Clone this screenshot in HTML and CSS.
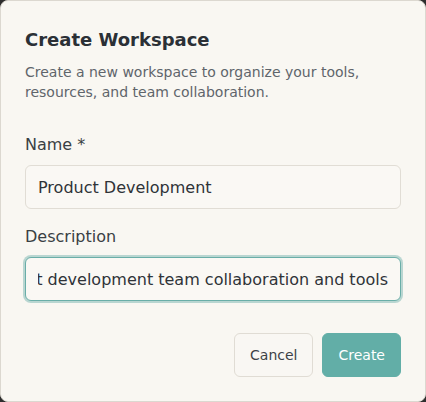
FILE: index.html
```html
<!DOCTYPE html>
<html lang="en">
<head>
<meta charset="utf-8">
<title>Create Workspace</title>
<link rel="stylesheet" href="styles.css">
</head>
<body>
<form class="dialog" onsubmit="return false">
  <h2 class="dialog-title">Create Workspace</h2>
  <p class="dialog-desc">Create a new workspace to organize your tools, resources, and team collaboration.</p>
  <div class="field field-name">
    <label class="field-label" for="ws-name">Name *</label>
    <input class="field-input" id="ws-name" type="text" value="Product Development">
  </div>
  <div class="field field-desc">
    <label class="field-label" for="ws-desc">Description</label>
    <input class="field-input field-input-focused field-input-end" id="ws-desc" type="text" value="Workspace for product development team collaboration and tools">
  </div>
  <div class="dialog-actions">
    <button type="button" class="btn btn-secondary">Cancel</button>
    <button type="submit" class="btn btn-primary">Create</button>
  </div>
</form>
</body>
</html>
```

FILE: styles.css
```css
html, body {
  margin: 0;
  padding: 0;
  background: #2e2e2e;
}

body {
  font-family: "DejaVu Sans", "Liberation Sans", sans-serif;
}

.dialog {
  box-sizing: border-box;
  width: 426px;
  height: 402px;
  margin: 0;
  padding: 27px 24px 24px;
  background: #f9f7f2;
  border: 1px solid #dcd8d0;
  border-radius: 8px;
  display: flex;
  flex-direction: column;
}

.dialog-title {
  margin: 0;
  font-size: 18px;
  line-height: 24px;
  font-weight: 700;
  color: #2b3036;
}

.dialog-desc {
  margin: 10px 0 0;
  font-size: 14px;
  line-height: 20px;
  color: #5f656b;
}

.field {
  display: flex;
  flex-direction: column;
}

.field-name {
  margin-top: 33px;
}

.field-desc {
  margin-top: 18px;
}

.field-label {
  font-size: 16px;
  line-height: 20px;
  color: #3a3f44;
  margin-bottom: 10px;
}

.field-input {
  box-sizing: border-box;
  width: 100%;
  height: 44px;
  margin: 0;
  padding: 0 12px;
  font-family: inherit;
  font-size: 16px;
  color: #2f3338;
  background: #faf8f4;
  border: 1px solid #e1ddd5;
  border-radius: 6px;
  outline: none;
}

.field-input-focused {
  border-color: #6aaea8;
  box-shadow: 0 0 0 2px rgba(106, 174, 168, 0.45);
}

.field-input-end {
  direction: rtl;
  caret-color: transparent;
}

.dialog-actions {
  margin-top: 32px;
  display: flex;
  justify-content: flex-end;
  gap: 9px;
}

.btn {
  box-sizing: border-box;
  height: 44px;
  padding: 0 15px;
  font-family: inherit;
  font-size: 14px;
  border-radius: 6px;
  cursor: pointer;
}

.btn-secondary {
  background: #f9f7f3;
  border: 1px solid #e0dcd4;
  color: #3d4247;
}

.btn-primary {
  background: #62aea7;
  border: 1px solid #62aea7;
  color: #ffffff;
}
```
